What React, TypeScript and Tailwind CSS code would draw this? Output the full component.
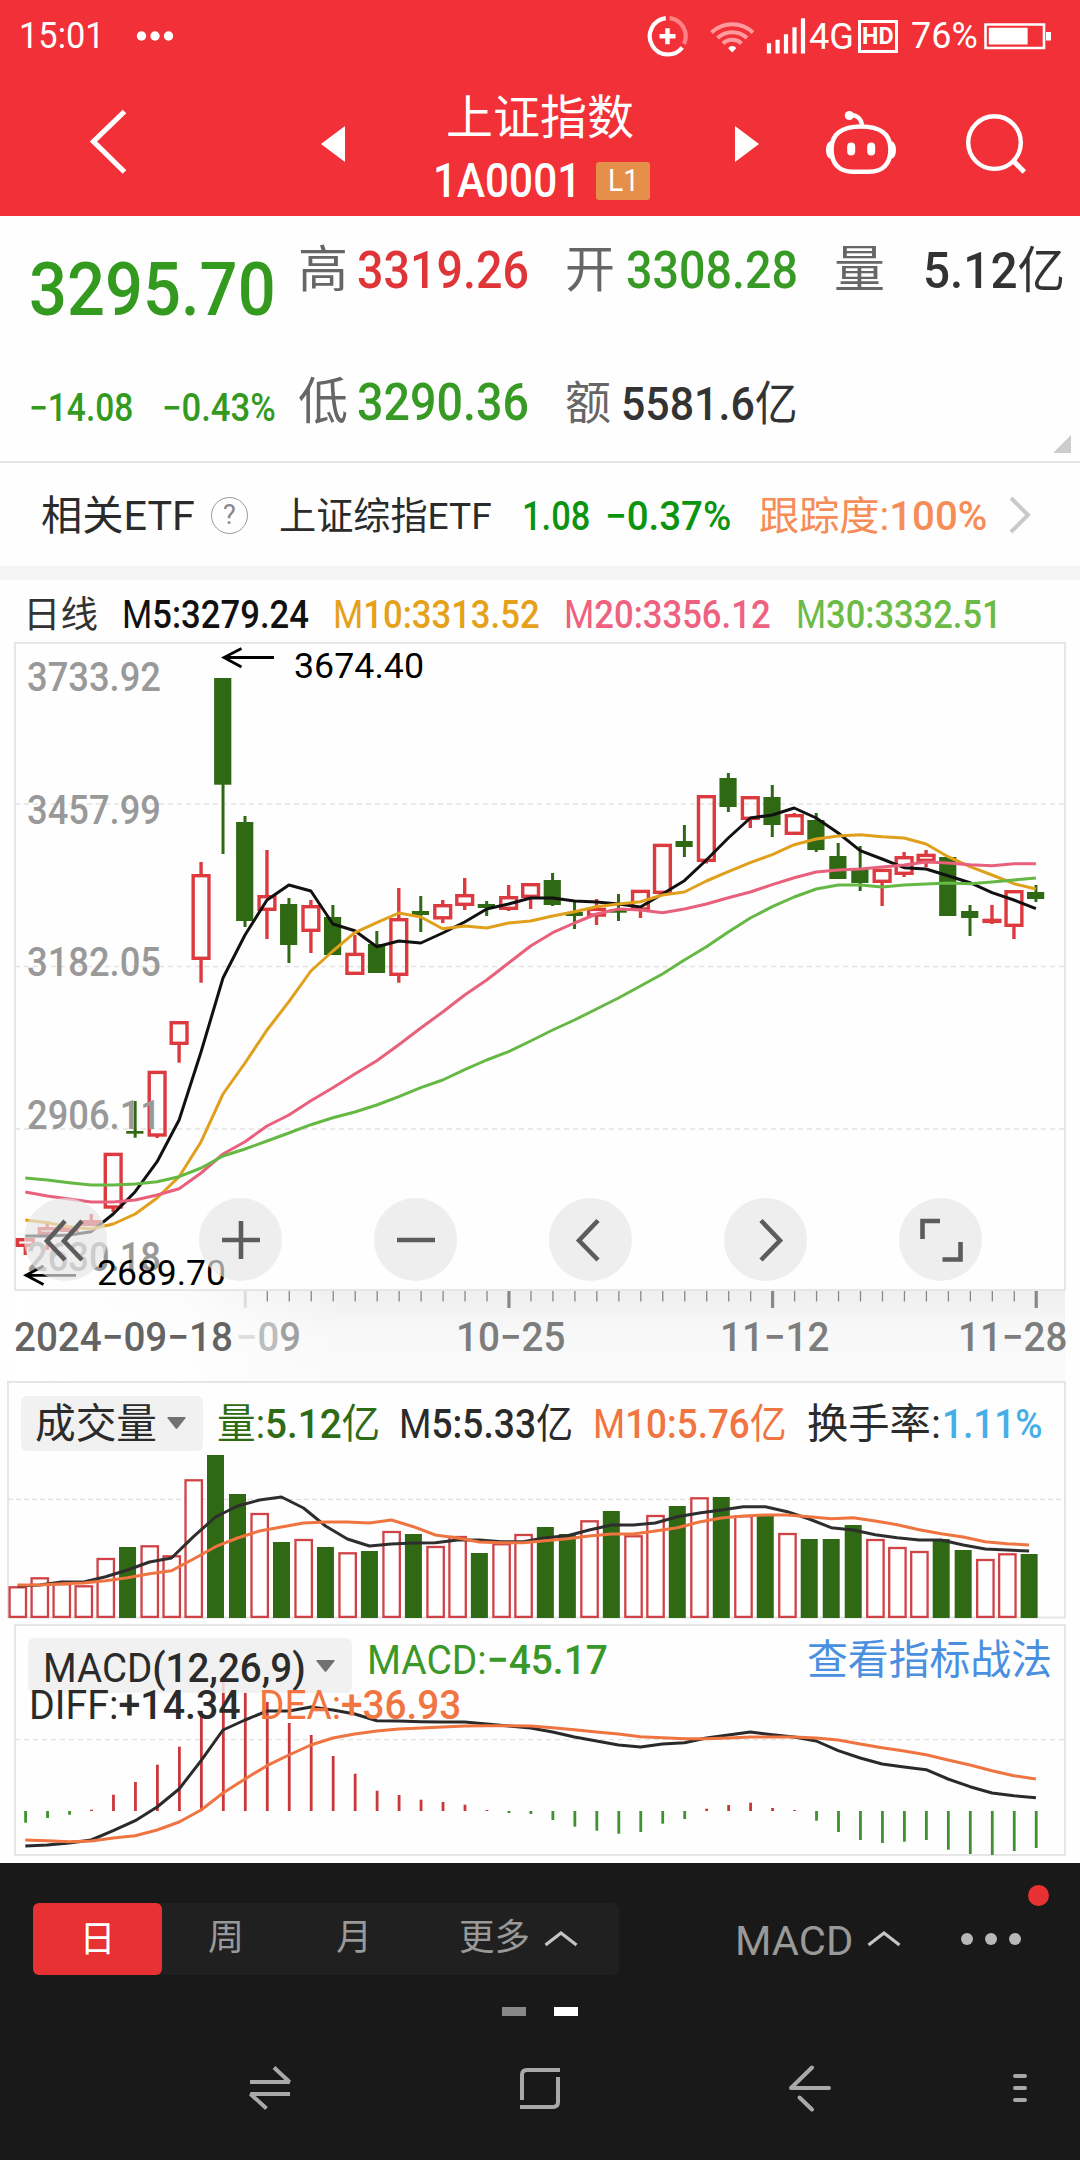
import { useLayoutEffect, useRef, type ReactNode } from 'react';

const FONT = "font-['Roboto','Noto_Sans_CJK_SC',sans-serif]";

/* One line of text, condensed or stretched to fill the width of its box. */
function Fit({ className, children }: { className: string; children: ReactNode }) {
  const box = useRef<HTMLDivElement>(null);
  const text = useRef<HTMLSpanElement>(null);
  useLayoutEffect(() => {
    const apply = () => {
      if (!box.current || !text.current) return;
      const k = box.current.clientWidth / text.current.offsetWidth;
      text.current.style.transform = `scaleX(${k})`;
    };
    apply();
    document.fonts?.ready.then(apply);
  }, []);
  return (
    <div ref={box} className={`shrink-0 whitespace-nowrap ${className}`}>
      <span ref={text} className="inline-block origin-left">
        {children}
      </span>
    </div>
  );
}

const N = ({ children }: { children: ReactNode }) => <span className="font-normal">{children}</span>;

/* ---------- data ---------- */

const X0 = 25.3;
const STEP = 21.97;
const cx = (i: number) => X0 + STEP * i;
const vx = (i: number) => 17.6 + 21.99 * i;

type Candle = [string, number, number, number, number]; // kind, body top, body bottom, high, low
const candles: Candle[] = [
  ['r', 1238, 1247, 1238, 1255], ['r', 1227, 1235, 1221, 1250], ['r', 1226, 1232, 1226, 1232], ['r', 1220, 1226, 1214, 1226],
  ['r', 1152.7, 1208.7, 1152.7, 1212], ['g', 1131, 1133.7, 1101, 1137.7], ['r', 1070.7, 1136.7, 1070.7, 1138], ['r', 1021, 1045, 1021, 1062.7],
  ['r', 874, 960, 862, 982.7], ['g', 678, 784.7, 678, 854], ['g', 822, 921, 816, 927], ['r', 895, 911, 850, 939],
  ['g', 904, 945, 898, 963], ['r', 905, 932, 900, 953], ['g', 917, 955, 905, 955], ['r', 952.7, 975, 935, 975],
  ['g', 944, 973, 931, 973], ['r', 918, 976, 888, 982.7], ['g', 911, 915, 896, 932], ['r', 904, 919.5, 900, 923],
  ['r', 894, 906, 878, 910], ['g', 904, 908, 901, 916], ['r', 896, 910, 885, 911], ['r', 883, 898, 883, 909],
  ['g', 880, 905, 873, 906], ['g', 912, 916, 901, 929], ['r', 907.7, 916.7, 899, 925], ['g', 909, 912.7, 894, 921],
  ['r', 889.7, 910.7, 889.7, 918], ['r', 843.7, 894, 843.7, 894], ['g', 841, 847, 825, 857], ['r', 795, 862, 795, 863.5],
  ['g', 778, 807, 773, 812], ['r', 796, 820, 796, 828], ['g', 797, 825, 785, 837], ['r', 814, 835, 813, 835],
  ['g', 820, 850, 813, 852], ['g', 856, 879, 843, 879], ['g', 869, 883, 846, 891], ['r', 868.7, 883, 868.7, 906],
  ['r', 856, 875, 852, 877], ['r', 853.7, 862, 850, 867], ['g', 857, 916, 857, 916], ['g', 911, 918, 905, 936],
  ['r', 918.7, 923, 905, 924], ['r', 890, 927, 890, 939], ['g', 892, 899, 885, 902],
];

const ma5 = [1236, 1236, 1235, 1231.7, 1214, 1191.7, 1161.7, 1120, 1051.7, 978, 935, 900, 885, 891, 924, 930.7, 946.7, 941, 943, 933, 922, 909, 904, 898, 898, 901, 902, 904, 907, 894, 880.7, 860, 838, 818, 815, 808, 818, 833, 850.7, 859, 867.7, 869, 875.7, 882.7, 892.7, 900, 908.7];
const ma10 = [1220, 1222.7, 1226.7, 1229, 1224, 1214, 1198, 1176.7, 1141.7, 1094, 1063, 1030, 1001.7, 971, 951, 932.7, 922.7, 913, 917, 928.7, 926, 928, 923, 921, 916, 911.7, 906.7, 904, 901.7, 895, 892, 881, 871.7, 862.7, 854.7, 844.7, 839, 836, 834.7, 836.7, 838, 844, 856.7, 866.7, 875, 883.7, 889];
const ma20 = [1192, 1196, 1199, 1202, 1202, 1200, 1195, 1188.7, 1173, 1154, 1141.7, 1126, 1115, 1100.7, 1087.7, 1074, 1060.7, 1044.7, 1028, 1012, 995, 980, 963, 946, 932.7, 923, 914, 909, 910, 912.7, 909, 904, 897.7, 892, 884.7, 877.7, 872, 870, 869, 867, 865, 862, 863, 864.7, 865.7, 863.7, 863.7];
const ma30 = [1178, 1180, 1182.7, 1185, 1185, 1184, 1181.7, 1176.7, 1168, 1156, 1149, 1141, 1133, 1124.7, 1117.7, 1112, 1105, 1096.7, 1087.7, 1080, 1069.7, 1060, 1051.7, 1041, 1030, 1020, 1009, 998, 986, 974, 960, 946.7, 932, 918, 906.7, 897, 889, 885, 885, 887, 885, 884, 883, 883.7, 882, 880, 878];

const volumes = 'r1586 r1577 r1583 r1585 r1557.7 g1547 r1545 r1555 r1479 g1455 g1494 r1512.7 g1542 r1538.7 g1547 r1552 g1551 r1530.7 g1534 r1545.7 r1535.7 g1553 r1543 r1533.7 g1527 g1534 r1520 g1511 r1535 r1514.7 g1506 r1497 g1497 r1515 g1516 r1532.7 g1539 g1539 g1525 r1538.7 r1546.7 r1550.7 g1539 g1550 r1558.7 r1553 g1554'
  .split(' ')
  .map((v) => ({ up: v[0] === 'r', top: Number(v.slice(1)) }));
const vol5 = [1586, 1585, 1582, 1582, 1576.7, 1570, 1562, 1558, 1536.7, 1517, 1506, 1500, 1497, 1508, 1526, 1539, 1546, 1544, 1543, 1542.7, 1540, 1540, 1541.7, 1541.7, 1537.7, 1535.7, 1530, 1525, 1525, 1523, 1516.7, 1513, 1510, 1506.7, 1506.7, 1511.7, 1519, 1527.7, 1530, 1534.7, 1537.7, 1540, 1540, 1545, 1549, 1550, 1551];
const vol10 = [1585, 1585, 1583.7, 1583, 1580.7, 1577.7, 1573.7, 1570.7, 1559, 1546.7, 1538, 1531, 1527, 1523, 1522, 1522, 1523, 1520, 1526.7, 1535, 1538, 1542, 1542.7, 1542.7, 1540.7, 1538.7, 1536, 1534, 1534, 1531, 1527.7, 1522, 1518, 1516, 1515, 1515, 1516.7, 1518.7, 1517.7, 1521, 1524.7, 1529.7, 1533.7, 1537, 1541.7, 1543.7, 1545];

const ZERO = 1811;
const macd = [1822.7, 1818, 1814.7, 1809.7, 1794.7, 1782, 1764.7, 1746.7, 1711, 1682, 1692.7, 1702, 1723, 1735, 1756, 1773.7, 1790.7, 1795, 1799.7, 1802, 1804.7, 1810, 1813, 1814, 1820, 1826.7, 1830.7, 1833.7, 1832, 1823.7, 1819, 1808.7, 1805, 1802.7, 1808, 1810, 1820.7, 1832, 1840, 1843, 1841.7, 1840, 1849.7, 1854, 1855, 1851, 1848];
const diff = [1846, 1845, 1843, 1840, 1830.7, 1820.7, 1807, 1789, 1760.7, 1730, 1720, 1711, 1711, 1707, 1710, 1714, 1720.7, 1721, 1721.7, 1722, 1722, 1724, 1726, 1728, 1732, 1737, 1741, 1745, 1747, 1744, 1742.7, 1738, 1735, 1732, 1734.7, 1737, 1741, 1750.7, 1758, 1764, 1767, 1769.7, 1779, 1786.7, 1793, 1795.7, 1797.7];
const dea = [1840, 1840.7, 1841.7, 1841, 1838, 1835.7, 1830, 1822, 1810, 1793, 1779, 1765.7, 1755, 1745, 1738, 1734, 1731, 1729, 1728, 1727, 1726, 1725.7, 1725.7, 1726, 1727.7, 1729.7, 1732, 1734, 1736.7, 1737.7, 1738.7, 1738.7, 1738, 1737, 1737, 1737, 1738, 1740, 1744, 1747.7, 1751, 1754.7, 1760, 1765, 1770.7, 1775.7, 1779];

const pts = (ys: number[], x: (i: number) => number) => ys.map((y, i) => `${x(i).toFixed(1)},${y}`).join(' ');

function Line({ ys, color, x = cx, w = 3 }: { ys: number[]; color: string; x?: (i: number) => number; w?: number }) {
  return <polyline points={pts(ys, x)} fill="none" stroke={color} strokeWidth={w} strokeLinejoin="round" />;
}

/* ---------- header ---------- */

function StatusBar() {
  return (
    <div className="flex h-[72px] items-center text-white">
      <Fit className="ml-[19px] w-[86px] text-[36px] leading-[74px]">15:01</Fit>
      <svg className="ml-[31px] h-[12px] w-[38px]" viewBox="136 30 38 12" fill="#fff">
        <circle cx="141.5" cy="36" r="4.7" />
        <circle cx="155" cy="36" r="4.7" />
        <circle cx="168.5" cy="36" r="4.7" />
      </svg>
      <svg className="ml-[472px] h-[44px] w-[162px]" viewBox="646 14 162 44" fill="none">
        <path d="M665.8 18.2A18.2 18.2 0 1 0 682.3 47.5" stroke="#fff" strokeWidth="4.2" />
        <path d="M669.5 18.2A18.2 18.2 0 0 1 684 44" stroke="#ff8287" strokeWidth="4.2" />
        <path d="M659.5 36.3h16M667.5 28.3v16" stroke="#fff" strokeWidth="4.5" />
        <g stroke="#ff9b9e" strokeWidth="4">
          <path d="M711.5 32.5a30 30 0 0 1 41.5 0" />
          <path d="M717.5 38a21.5 21.5 0 0 1 29.5 0" />
          <path d="M723 43.5a13.5 13.5 0 0 1 18.5 0" />
        </g>
        <path d="M732.2 52.5l-4-4.2a4.3 3.6 0 0 1 8 0z" fill="#fff" />
        <path d="M769 53.6v-10.3M777.6 53.6v-13.9M786 53.6v-19.3M794.5 53.6v-26.3M803 53.6v-35.3" stroke="#fff" strokeWidth="4.2" />
      </svg>
      <Fit className="ml-[1px] w-[45px] text-[37px] leading-[77px]">4G</Fit>
      <div className="ml-[4px] flex h-[33px] w-[40px] items-center justify-center border-[3px] border-white">
        <Fit className="w-[32px] text-[24px] leading-[26px] font-bold">HD</Fit>
      </div>
      <Fit className="ml-[13px] w-[67px] text-[37px] leading-[74px]">76%</Fit>
      <svg className="ml-[6px] h-[27px] w-[68px]" viewBox="985 23 68 27" fill="none">
        <path d="M986.5 24.5h58.5v23.5h-58.5z" stroke="#fff" strokeWidth="2.6" />
        <path d="M989.8 27.7h38.8v16.8h-38.8zM1047 32h5v8.5h-5z" fill="#fff" />
      </svg>
    </div>
  );
}

function TitleBar() {
  return (
    <div className="flex h-[144px] items-start text-white">
      <svg className="mt-[36px] ml-[88px] h-[68px] w-[40px]" viewBox="88 108 40 68" fill="none">
        <path d="M124.5 111.5L93.5 141.5L124.5 172" stroke="#fff" strokeWidth="5.2" />
      </svg>
      <svg className="mt-[54px] ml-[193px] h-[36px] w-[24px]" viewBox="0 0 24 36">
        <path d="M0 18L24 0V36z" fill="#fff" />
      </svg>
      <div className="ml-[88px] w-[220px]">
        <Fit className="mt-[21px] ml-[13px] w-[188px] text-[47px] leading-[50px]">上证指数</Fit>
        <div className="mt-[15px] flex items-center">
          <Fit className="w-[148px] text-[48px] leading-[46px] font-medium">1A0001</Fit>
          <div className="ml-[15px] flex h-[38px] w-[54px] items-center justify-center rounded-[3px] bg-[#e4904a]">
            <Fit className="w-[31px] text-[31px] leading-[38px]">L1</Fit>
          </div>
        </div>
      </div>
      <svg className="mt-[54px] ml-[82px] h-[36px] w-[24px]" viewBox="0 0 24 36">
        <path d="M24 18L0 0V36z" fill="#fff" />
      </svg>
      <svg className="mt-[36px] ml-[65px] h-[70px] w-[74px]" viewBox="824 108 74 70" fill="none" stroke="#fff">
        <path d="M861 126.5C880 126.5 890.5 134 890.5 149C890.5 164 883 171.8 869 171.8H853C839 171.8 831.5 164 831.5 149C831.5 134 842 126.5 861 126.5z" strokeWidth="4.6" />
        <path d="M849 115.5C856 114.5 861.5 117.5 862 126" strokeWidth="4.4" />
        <circle cx="849.3" cy="115.5" r="4.6" fill="#fff" stroke="none" />
        <path d="M832 141C828 141 826 145 826 150C826 155 828 159 832 159zM890 141C894 141 896 145 896 150C896 155 894 159 890 159z" fill="#fff" stroke="none" />
        <path d="M851.2 146.5v5M871.2 146.5v5" strokeWidth="8" strokeLinecap="round" />
      </svg>
      <svg className="mt-[38px] ml-[64px] h-[68px] w-[68px]" viewBox="962 110 68 68" fill="none" stroke="#fff" strokeWidth="4.4">
        <circle cx="994.5" cy="142.6" r="26.3" />
        <path d="M1013.5 161L1024.3 172" strokeWidth="5" />
      </svg>
    </div>
  );
}

/* ---------- quote ---------- */

function Quote() {
  return (
    <section className="relative flex h-[247px] border-b-2 border-[#e4e4e4]">
      <div className="w-[299px] font-medium text-[#33991f]">
        <Fit className="mt-[36px] ml-[29px] w-[247px] text-[75px] leading-[75px]">3295.70</Fit>
        <div className="mt-[61px] flex text-[38px] leading-[40px]">
          <Fit className="ml-[29px] w-[104px]">−14.08</Fit>
          <Fit className="ml-[29px] w-[114px]">−0.43%</Fit>
        </div>
      </div>
      <div className="text-[50px] text-[#333]">
        <div className="flex h-[104px] items-center leading-[104px]">
          <Fit className="mt-[4px] -ml-[1px] w-[50px] text-[#666]">高</Fit>
          <Fit className="mt-[5px] ml-[9px] w-[172px] text-[51.5px] font-medium text-[#df3438]">3319.26</Fit>
          <Fit className="mt-[4px] ml-[36px] w-[50px] text-[#666]">开</Fit>
          <Fit className="mt-[5px] ml-[11px] w-[172px] text-[51.5px] font-medium text-[#369a24]">3308.28</Fit>
          <Fit className="mt-[4px] ml-[36px] w-[51px] text-[#666]">量</Fit>
          <Fit className="mt-[5px] ml-[38px] w-[142px] text-[50px] font-medium">
            5.12<N>亿</N>
          </Fit>
        </div>
        <div className="mt-[28px] flex h-[104px] items-center leading-[104px]">
          <Fit className="mt-[4px] -ml-[1px] w-[50px] text-[#666]">低</Fit>
          <Fit className="mt-[5px] ml-[9px] w-[172px] text-[51.5px] font-medium text-[#369a24]">3290.36</Fit>
          <Fit className="mt-[5px] ml-[36px] w-[46px] text-[46px] text-[#666]">额</Fit>
          <Fit className="mt-[8px] ml-[10px] w-[177px] text-[47px] font-medium">
            5581.6<N>亿</N>
          </Fit>
        </div>
      </div>
      <svg className="absolute right-[9px] bottom-[8px] h-[18px] w-[18px]" viewBox="0 0 18 18">
        <path d="M18 0V18H0z" fill="#ccc" />
      </svg>
    </section>
  );
}

function EtfRow() {
  return (
    <section className="flex h-[117px] items-center border-b-[14px] border-[#f5f5f5] text-[40px] leading-[103px] text-[#2b2b2b]">
      <Fit className="mt-[3px] ml-[41px] w-[154px] text-[41px]">相关ETF</Fit>
      <div className="mt-px ml-[16px] flex h-[37px] w-[37px] items-center justify-center rounded-full border-[1.5px] border-[#999] text-[27px] leading-[34px] text-[#888]">
        ?
      </div>
      <Fit className="mt-[3px] ml-[31px] w-[213px] text-[37.5px]">上证综指ETF</Fit>
      <Fit className="mt-[4px] ml-[30px] w-[68px] font-medium text-[#0a9410]">1.08</Fit>
      <Fit className="mt-[4px] ml-[15px] w-[126px] font-medium text-[#0a9410]">−0.37%</Fit>
      <Fit className="mt-[3px] ml-[28px] w-[228px] font-medium text-[#f68c57]">
        <N>跟踪度:</N>100%
      </Fit>
      <svg className="mt-px ml-[21px] h-[40px] w-[24px]" viewBox="0 0 24 40" fill="none">
        <path d="M3 3L20 20L3 37" stroke="#c9c9c9" strokeWidth="4" />
      </svg>
    </section>
  );
}

/* ---------- daily chart ---------- */

function Averages() {
  return (
    <div className="flex h-[62px] items-start text-[38px] leading-[70px] font-medium">
      <Fit className="mt-px ml-[23px] w-[75px] text-[37px] font-normal text-[#333]">日线</Fit>
      <Fit className="ml-[24px] w-[187px] text-[#111]"><N>M</N>5:3279.24</Fit>
      <Fit className="ml-[24px] w-[207px] text-[#e5a11a]"><N>M</N>10:3313.52</Fit>
      <Fit className="ml-[24px] w-[207px] text-[#ee6180]"><N>M</N>20:3356.12</Fit>
      <Fit className="ml-[25px] w-[206px] text-[#6cbb47]"><N>M</N>30:3332.51</Fit>
    </div>
  );
}

const priceLabels: [string, number][] = [
  ['3733.92', 691], ['3457.99', 824], ['3182.05', 976], ['2906.11', 1128.5], ['2630.18', 1271],
];

function RoundButton({ children }: { children: ReactNode }) {
  return (
    <button className="flex h-[83px] w-[83px] items-center justify-center rounded-full bg-[#e5e5e5]/67">
      <svg className="h-[60px] w-[60px]" viewBox="-30 -30 60 60" fill="none" stroke="#5c5c5c" strokeWidth="4.6">
        {children}
      </svg>
    </button>
  );
}

function DailyChart() {
  return (
    <section className="relative h-[649px]">
      <svg className="h-[649px] w-[1080px]" viewBox="0 642 1080 649">
        <path d="M15 643H1065V1290H15z" fill="none" stroke="#e6e6e6" strokeWidth="2" />
        <path d="M15 804H1065M15 966.5H1065M15 1129H1065" stroke="#e2e2e2" strokeWidth="1.3" strokeDasharray="5 4" />
        {candles.map(([kind, top, bottom, high, low], i) => {
          const x = cx(i);
          return kind === 'g' ? (
            <g key={i} fill="#2f6913">
              <rect x={x - 1.5} y={high} width="3" height={low - high} />
              <rect x={x - 8.9} y={top} width="17.2" height={bottom - top} />
            </g>
          ) : (
            <g key={i} stroke="#dc3a3f" strokeWidth="3.4" fill="none">
              {high < top && <path d={`M${x} ${high}V${top + 1}`} />}
              {low > bottom && <path d={`M${x} ${bottom - 1}V${low}`} />}
              <rect x={x - 7.9} y={top + 1.7} width="15.8" height={Math.max(bottom - top - 3.4, 1)} />
            </g>
          );
        })}
        <g fontFamily="Roboto" fontSize="40" fontWeight="500" fill="#999">
          {priceLabels.map(([t, y]) => (
            <text key={t} x="27" y={y} textLength="134" lengthAdjust="spacingAndGlyphs">{t}</text>
          ))}
        </g>
        <Line ys={ma5} color="#111" />
        <Line ys={ma10} color="#e0a01c" />
        <Line ys={ma20} color="#e9607d" />
        <Line ys={ma30} color="#66b844" />
        <g fill="none" stroke="#000" strokeWidth="2.8">
          <path d="M274 657.5H224M241.5 648.5L224 657.5L241.5 667" />
          <path d="M76 1275.3H26M43.5 1266L26 1275.3L43.5 1284.5" />
        </g>
        <g fontFamily="Roboto" fontSize="35.5" fill="#000">
          <text x="294" y="678.3" textLength="130" lengthAdjust="spacingAndGlyphs">3674.40</text>
          <text x="97" y="1285.3" textLength="129" lengthAdjust="spacingAndGlyphs">2689.70</text>
        </g>
      </svg>
      <div className="absolute bottom-[10px] left-[24px] flex gap-[92px]">
        <RoundButton><path d="M-1 -19L-19 1L-1 20M16 -19L-2 1L16 20" /></RoundButton>
        <RoundButton><path d="M-19 0H19M0 -19V19" /></RoundButton>
        <RoundButton><path d="M-19 0H19" /></RoundButton>
        <RoundButton><path d="M7 -19.5L-12 0.5L7 20" /></RoundButton>
        <RoundButton><path d="M-5 -19.5L14 0.5L-5 20" /></RoundButton>
        <RoundButton><path d="M-18.5 -1V-19H-1M19.5 2V19.5H1.5" /></RoundButton>
      </div>
    </section>
  );
}

function DateAxis() {
  return (
    <section className="relative ml-[15px] h-[90px] w-[1050px] bg-linear-to-b from-[#efefef] via-[#f8f8f8] via-45% to-[#fafafa] text-[40px] leading-[94px] font-medium text-[#7d7d7d]">
      <div className="absolute inset-y-0 left-0 w-[330px] bg-linear-to-r from-white via-white/80 to-white/0" />
      <svg className="absolute top-0 left-0 h-[20px] w-[1050px]" viewBox="15 1291 1050 20">
        {candles.map((_, i) => {
          if (i < 10) return null;
          const major = i % 12 === 10;
          return (
            <rect
              key={i}
              x={cx(i) - (major ? 1.3 : 0.3)}
              y="1291"
              width={major ? 3.2 : 1.3}
              height={major ? 17 : 10.5}
              fill={i === 10 ? '#dedede' : '#888'}
            />
          );
        })}
      </svg>
      <div className="relative flex">
        <Fit className="-ml-px w-[219px] text-[#646464]">2024−09−18</Fit>
        <Fit className="ml-[3px] w-[65px]">
          <span className="text-[#dedede]">−</span>
          <span className="text-[#bdbdbd]">0</span>
          <span className="text-[#a0a0a0]">9</span>
        </Fit>
        <Fit className="ml-[155px] w-[109px]">10−25</Fit>
        <Fit className="ml-[155px] w-[109px]">11−12</Fit>
        <Fit className="ml-[129px] w-[109px]">11−28</Fit>
      </div>
    </section>
  );
}

/* ---------- indicator panels ---------- */

function Caret() {
  return (
    <svg className="h-[12px] w-[19px]" viewBox="0 0 19 12">
      <path d="M1 0H18Q19 .5 18.4 1.3L10.5 11.3Q9.5 12.4 8.5 11.3L.6 1.3Q0 .5 1 0z" fill="#717171" />
    </svg>
  );
}

function VolumePanel() {
  return (
    <section className="relative h-[243px]">
      <svg className="absolute inset-0 h-[243px] w-[1080px]" viewBox="0 1381 1080 243">
        <path d="M8 1382H1065V1617.5H8z" fill="none" stroke="#e6e6e6" strokeWidth="2" />
        <path d="M8 1499.3H1065" stroke="#dedede" strokeWidth="1.2" strokeDasharray="5 3" />
        {volumes.map(({ up, top }, i) =>
          up ? (
            <rect key={i} x={vx(i) - 8} y={top + 1.3} width="16.4" height={1618 - top - 2.4} fill="#fff" stroke="#cf4347" strokeWidth="2.3" />
          ) : (
            <rect key={i} x={vx(i) - 8.5} y={top} width="17" height={1618 - top} fill="#2f6913" />
          ),
        )}
        <Line ys={vol5} color="#2e2e2e" x={vx} />
        <Line ys={vol10} color="#ef7440" x={vx} />
      </svg>
      <div className="relative flex h-[84px] items-center text-[41px] leading-[86px] font-medium">
        <div className="ml-[21px] flex h-[55px] w-[182px] items-center rounded-[6px] bg-[#f1f1f1] text-[#2b2b2b]">
          <Fit className="mt-[2px] ml-[14px] w-[122px] leading-[55px] font-normal">成交量</Fit>
          <div className="ml-[10px]"><Caret /></div>
        </div>
        <Fit className="mt-[2px] ml-[14px] w-[163px] text-[#2f6b14]"><N>量:</N>5.12<N>亿</N></Fit>
        <Fit className="mt-[2px] ml-[19px] w-[174px] text-[#2b2b2b]"><N>M</N>5:5.33<N>亿</N></Fit>
        <Fit className="mt-[2px] ml-[20px] w-[194px] text-[#f07541]"><N>M</N>10:5.76<N>亿</N></Fit>
        <Fit className="mt-[2px] ml-[20px] w-[134px] font-normal text-[#2b2b2b]">换手率:</Fit>
        <Fit className="mt-[2px] ml-[1px] w-[101px] text-[#46aee8]">1.11%</Fit>
      </div>
    </section>
  );
}

function MacdPanel() {
  return (
    <section className="relative h-[239px]">
      <svg className="absolute inset-0 h-[239px] w-[1080px]" viewBox="0 1624 1080 239">
        <path d="M15 1625H1065V1855H15z" fill="none" stroke="#e6e6e6" strokeWidth="2" />
        <path d="M15 1739.7H1065" stroke="#e2e2e2" strokeWidth="1.2" strokeDasharray="5 4" />
        {macd.map((y, i) => (
          <rect
            key={i}
            x={cx(i) - 1.1}
            y={Math.min(y, ZERO)}
            width="2.8"
            height={Math.abs(y - ZERO)}
            fill={y < ZERO ? '#c9383b' : '#3f932e'}
          />
        ))}
        <Line ys={diff} color="#2a2a2a" />
        <Line ys={dea} color="#ef7440" />
      </svg>
      <div className="relative flex items-start pt-[14px] text-[41px] leading-[44px]">
        <div className="ml-[28px] flex h-[55px] w-[324px] items-center rounded-[6px] bg-[#eeeeee]/85 text-[#2b2b2b]">
          <Fit className="mt-[5px] ml-[15px] w-[263px] leading-[55px]">
            MACD<span className="font-medium">(12,26,9)</span>
          </Fit>
          <div className="ml-[10px]"><Caret /></div>
        </div>
        <Fit className="ml-[15px] w-[241px] text-[#3a9829]">
          MACD:<span className="font-medium">−45.17</span>
        </Fit>
        <Fit className="ml-[199px] w-[245px] text-[#4a8fe0]">查看指标战法</Fit>
      </div>
      <div className="relative -mt-[10px] flex text-[41px] leading-[44px]">
        <Fit className="ml-[29px] w-[212px] text-[#2b2b2b]">
          DIFF:<span className="font-medium">+14.34</span>
        </Fit>
        <Fit className="ml-[18px] w-[202px] text-[#f07541]">
          DEA:<span className="font-medium">+36.93</span>
        </Fit>
      </div>
    </section>
  );
}

/* ---------- bottom ---------- */

function Chevron() {
  return (
    <svg className="h-[16px] w-[34px]" viewBox="0 0 34 16" fill="none">
      <path d="M1.5 14L17 2L32.5 14" stroke="#c4c4c4" strokeWidth="3.2" />
    </svg>
  );
}

function Bottom() {
  return (
    <footer className="relative h-[297px] bg-[#191919] text-[#999]">
      <div className="flex h-[152px] items-center text-[36px] leading-[72px]">
        <div className="-mt-px ml-[33px] flex h-[72px] w-[586px] items-center rounded-[6px] bg-[#202020]">
          <div className="w-[129px] rounded-[6px] bg-[#e83133] text-center leading-[74px] h-[72px] text-white">日</div>
          <div className="w-[128px] text-center leading-[75px]">周</div>
          <div className="w-[128px] text-center leading-[75px]">月</div>
          <Fit className="ml-[41px] w-[71px] leading-[75px]">更多</Fit>
          <div className="ml-[14px]"><Chevron /></div>
        </div>
        <Fit className="mt-[3px] ml-[116px] w-[118px] text-[41px]">MACD</Fit>
        <div className="ml-[14px]"><Chevron /></div>
        <div className="ml-[60px] flex gap-[12px]">
          <i className="h-[12px] w-[12px] rounded-full bg-[#b8b8b8]" />
          <i className="h-[12px] w-[12px] rounded-full bg-[#b8b8b8]" />
          <i className="h-[12px] w-[12px] rounded-full bg-[#b8b8b8]" />
        </div>
      </div>
      <i className="absolute top-[22px] right-[31px] h-[21px] w-[21px] rounded-full bg-[#e83133]" />
      <div className="mt-[-8px] flex h-[9px] justify-center gap-[28px]">
        <i className="w-[24px] bg-[#888]" />
        <i className="w-[24px] bg-white" />
      </div>
      <div className="mt-[47px] flex h-[50px]">
        <svg className="ml-[246px] h-[50px] w-[48px]" viewBox="246 2063 48 50" fill="none" stroke="#a9a9a9" strokeWidth="4">
          <path d="M250 2082H289.5L274 2067.5M290 2094H250.5L266.5 2108.5" strokeLinejoin="bevel" />
        </svg>
        <svg className="ml-[222px] h-[50px] w-[48px]" viewBox="516 2063 48 50" fill="none" stroke="#a9a9a9" strokeWidth="4">
          <path d="M522 2100V2075Q522 2070 527 2070H560M558 2077V2102Q558 2107 553 2107H520" />
        </svg>
        <svg className="ml-[222px] h-[50px] w-[48px]" viewBox="786 2063 48 50" fill="none" stroke="#a9a9a9" strokeWidth="4" strokeLinecap="round">
          <path d="M829 2088H791L812 2067.5M799.5 2097.5L812 2109.5" strokeLinejoin="round" />
        </svg>
        <svg className="ml-[174px] h-[50px] w-[24px]" viewBox="1008 2063 24 50" fill="none" stroke="#a9a9a9" strokeWidth="4" strokeLinecap="round">
          <path d="M1015 2076H1025M1015 2088H1025M1015 2100H1025" />
        </svg>
      </div>
    </footer>
  );
}

export default function App() {
  return (
    <main className={`flex h-[2160px] w-[1080px] flex-col overflow-hidden bg-[#fefefe] ${FONT}`}>
      <header className="h-[216px] bg-[#f23037]">
        <StatusBar />
        <TitleBar />
      </header>
      <Quote />
      <EtfRow />
      <Averages />
      <DailyChart />
      <DateAxis />
      <VolumePanel />
      <MacdPanel />
      <Bottom />
    </main>
  );
}
